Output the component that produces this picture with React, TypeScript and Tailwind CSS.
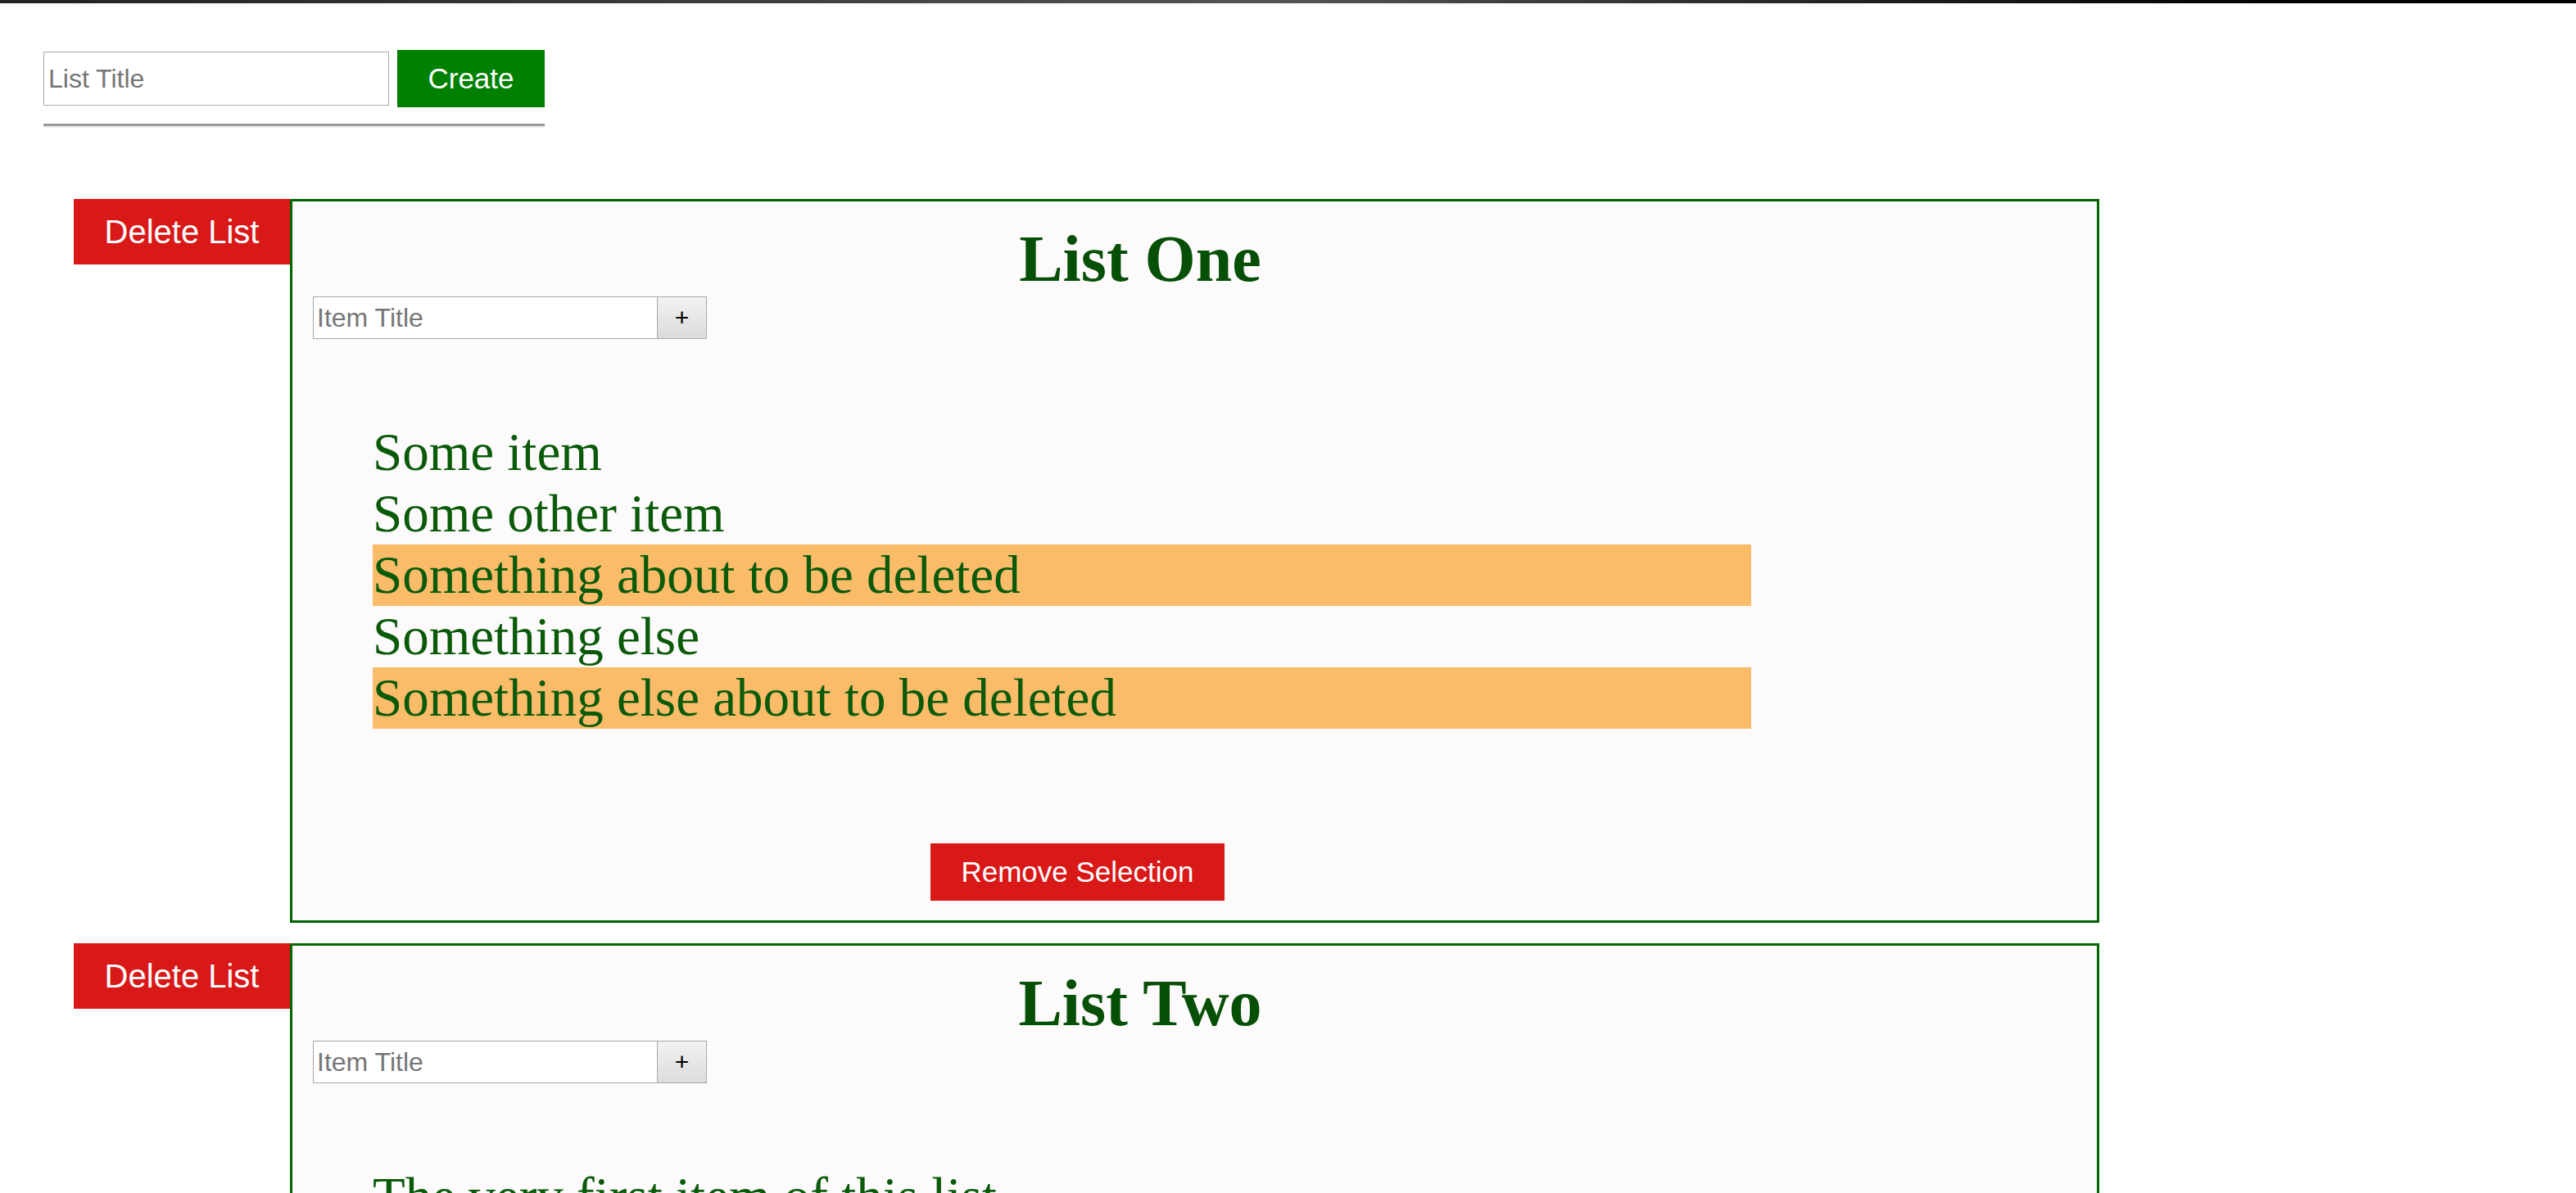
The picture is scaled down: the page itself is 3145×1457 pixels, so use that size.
import React from "react";

type Item = { text: string; selected?: boolean };

const lists: { title: string; items: Item[] }[] = [
  {
    title: "List One",
    items: [
      { text: "Some item" },
      { text: "Some other item" },
      { text: "Something about to be deleted", selected: true },
      { text: "Something else" },
      { text: "Something else about to be deleted", selected: true },
    ],
  },
  {
    title: "List Two",
    items: [
      { text: "The very first item of this list" },
      { text: "A second item" },
      { text: "Yet another item" },
    ],
  },
];

function ListCard({ title, items }: { title: string; items: Item[] }) {
  return (
    <div className="flex items-start mb-[25px]">
      <button className="w-[264px] h-[80px] bg-[#d91818] text-white text-[40px] font-['Liberation_Sans',Arial,sans-serif] shrink-0">
        Delete List
      </button>
      <div className="w-[2209px] border-[3px] border-[#006400] bg-[#fcfafa] pt-[24px] pb-[24px]">
        <h1 className="text-center pr-[133px] text-[80px] leading-[92px] font-bold text-[#064f06] font-['Liberation_Serif','Times_New_Roman',serif]">
          {title}
        </h1>
        <div className="flex ml-[25px] h-[52px]">
          <input
            placeholder="Item Title"
            className="w-[421px] h-[52px] border border-[#a9a9a9] bg-white px-[4px] text-[32px] font-['Liberation_Sans',Arial,sans-serif] placeholder:text-[#757575] outline-none"
          />
          <button className="w-[60px] h-[52px] border border-l-0 border-[#a9a9a9] bg-gradient-to-b from-[#f2f2f2] to-[#dcdcdc] text-[30px] leading-none text-black font-['Liberation_Sans',Arial,sans-serif]">
            +
          </button>
        </div>
        <ul className="mt-[101px] ml-[98px] w-[1683px]">
          {items.map((it, i) => (
            <li
              key={i}
              className={`text-[65px] leading-[75px] h-[75px] text-[#0a5a0a] font-['Liberation_Serif','Times_New_Roman',serif] ${
                it.selected ? "bg-[#fbbc6a]" : ""
              }`}
            >
              {it.text}
            </li>
          ))}
        </ul>
        <button className="mt-[140px] ml-[779px] w-[359px] h-[70px] bg-[#d91818] text-white text-[35px] font-['Liberation_Sans',Arial,sans-serif]">
          Remove Selection
        </button>
      </div>
    </div>
  );
}

export default function App() {
  return (
    <div className="min-h-screen w-full bg-white font-['Liberation_Sans',Arial,sans-serif]">
      <div className="h-[4px] w-full bg-gradient-to-r from-[#222222] via-[#555555] to-[#000000]" />
      <div className="ml-[53px] mt-[57px] flex items-center gap-[10px]">
        <input
          placeholder="List Title"
          className="w-[422px] h-[66px] border border-[#a9a9a9] bg-white px-[5px] text-[32px] font-['Liberation_Sans',Arial,sans-serif] placeholder:text-[#757575] outline-none"
        />
        <button className="w-[180px] h-[70px] bg-[#008000] text-white text-[35px] font-['Liberation_Sans',Arial,sans-serif]">
          Create
        </button>
      </div>
      <div className="ml-[53px] mt-[20px] w-[612px] h-[5px] border-t-[3px] border-[#9a9a9a] bg-[#ececec]" />
      <div className="ml-[90px] mt-[87px]">
        {lists.map((l) => (
          <ListCard key={l.title} title={l.title} items={l.items} />
        ))}
      </div>
    </div>
  );
}
